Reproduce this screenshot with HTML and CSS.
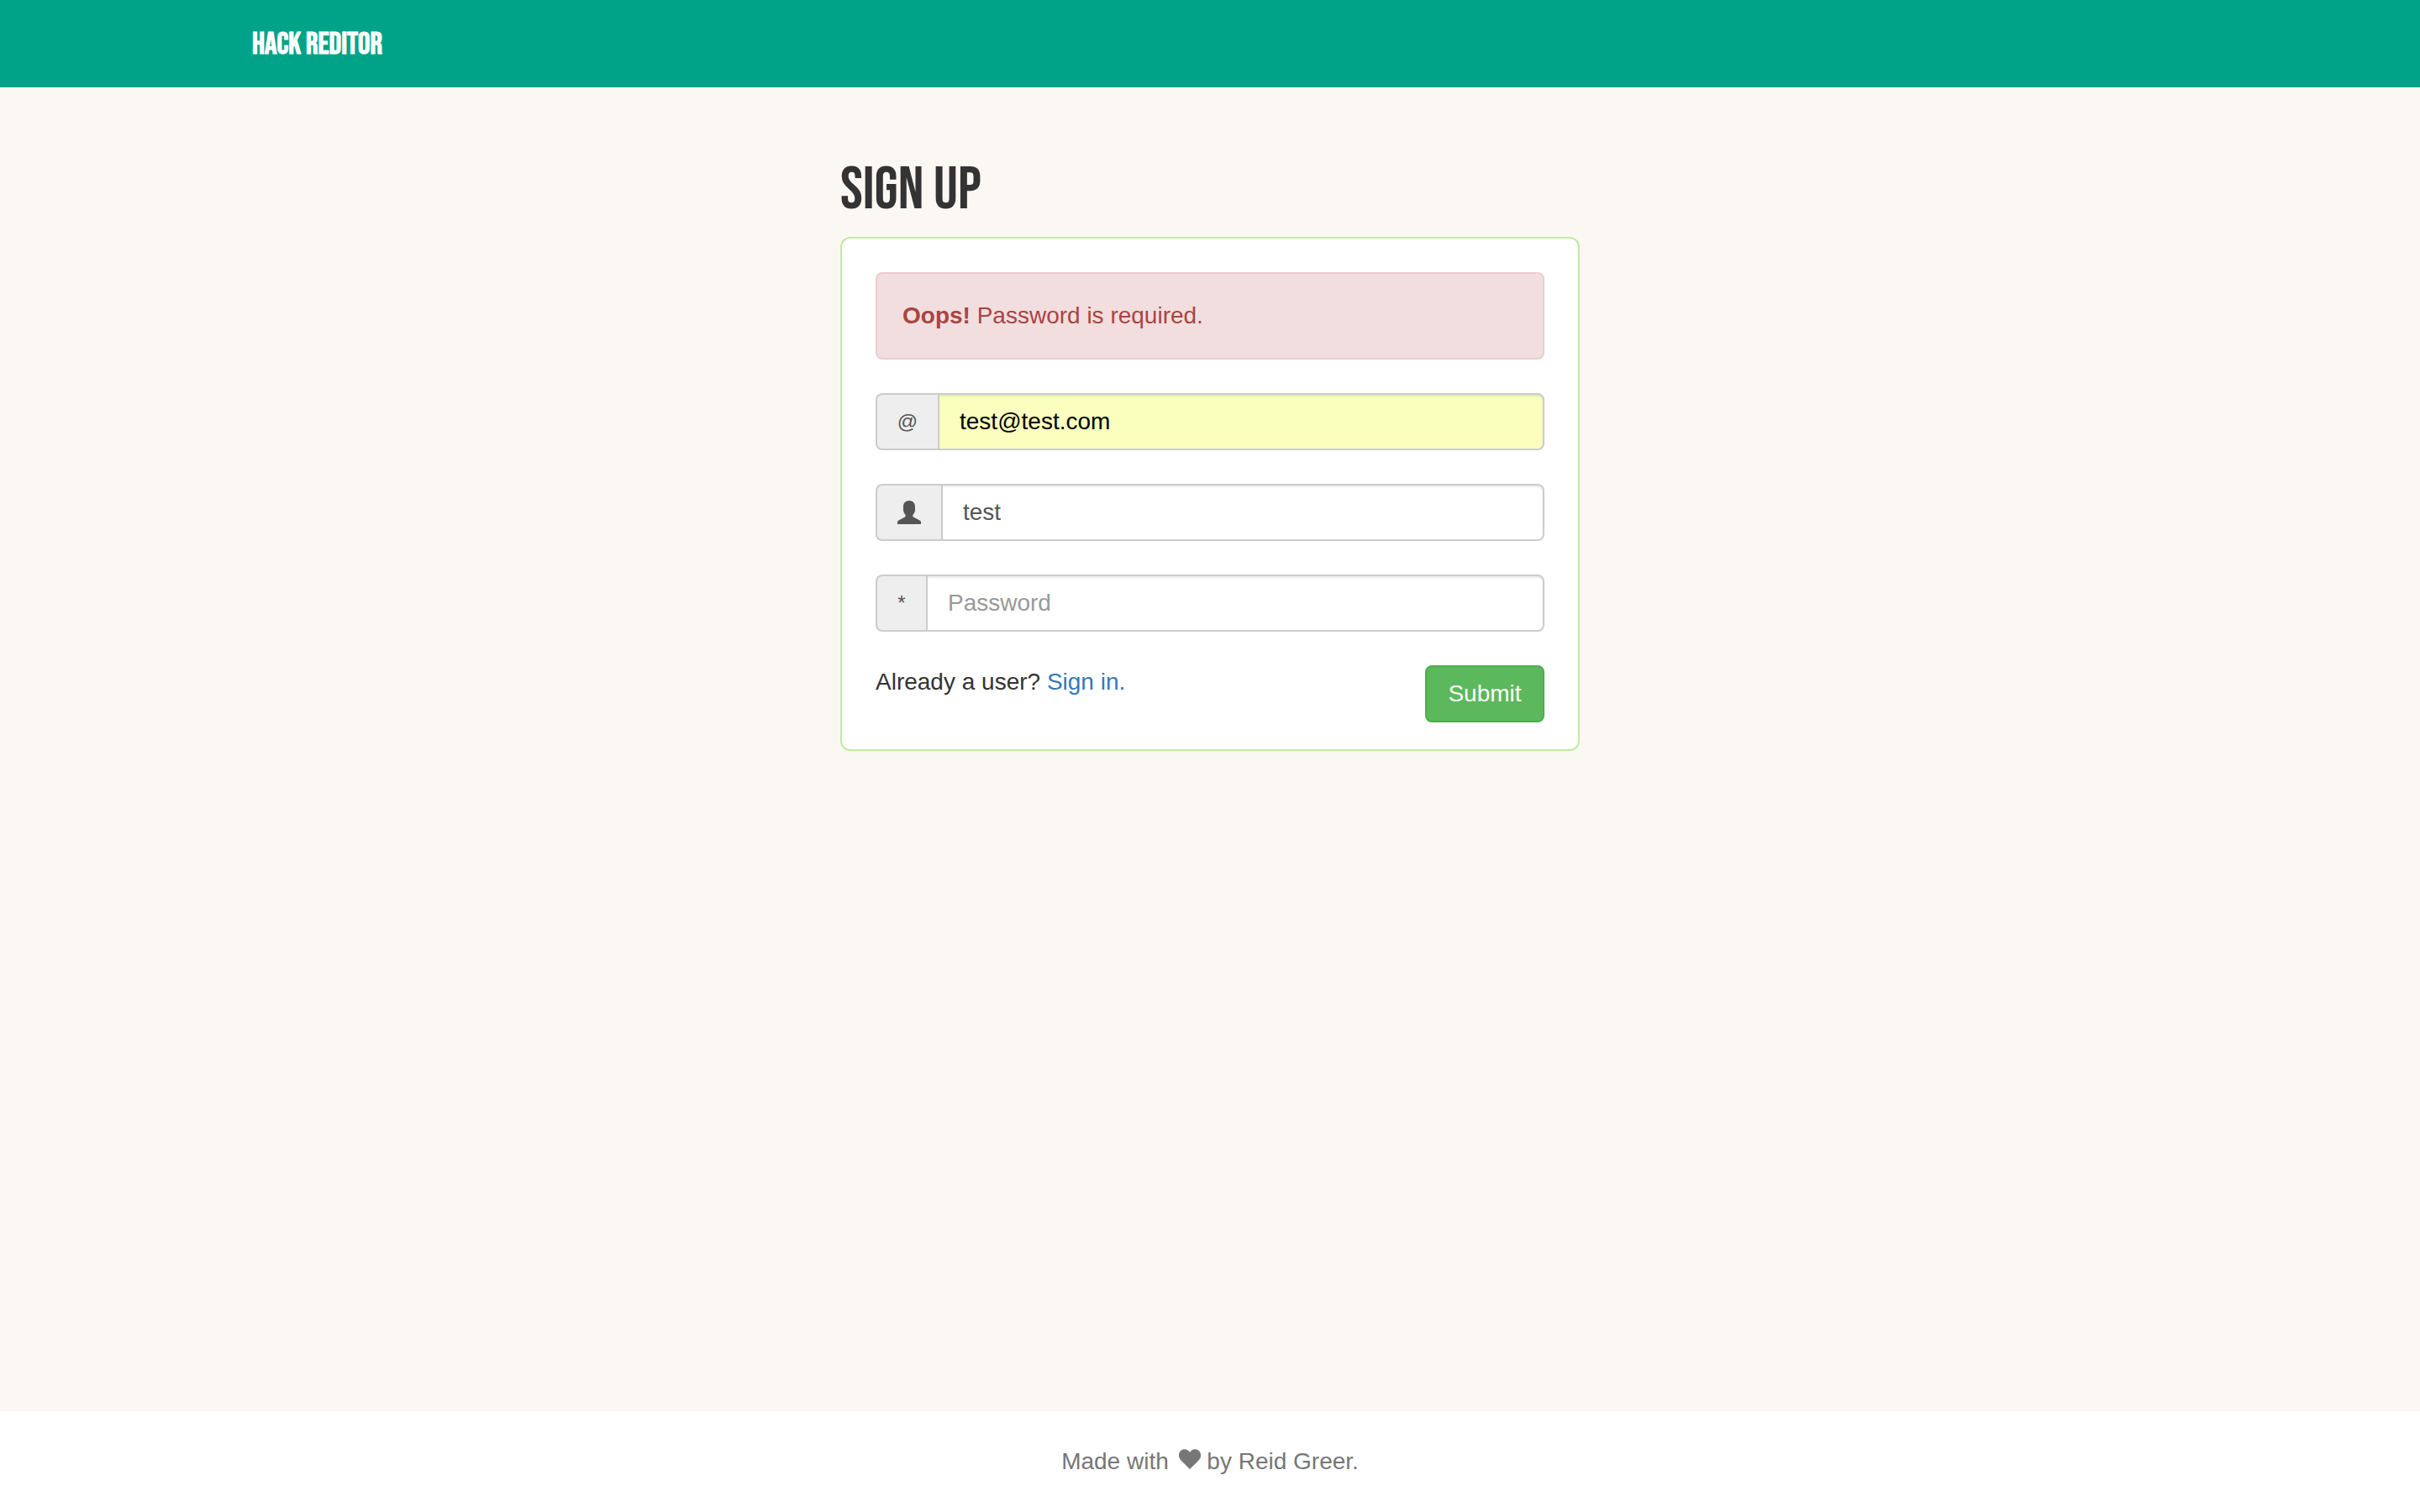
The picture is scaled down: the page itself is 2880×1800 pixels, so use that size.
FILE: index.html
```html
<!DOCTYPE html>
<html lang="en">
<head>
  <meta charset="utf-8">
  <title>Hack Reditor</title>
  <link rel="stylesheet" href="styles.css">
</head>
<body>
  <header class="navbar">
    <div class="container">
      <a class="brand" href="#">HACK REDITOR</a>
    </div>
  </header>
  <main class="signup">
    <h1 class="title">SIGN UP</h1>
    <form class="card">
      <div class="alert" role="alert"><strong>Oops!</strong> Password is required.</div>
      <div class="field">
        <label class="addon addon-at" for="email">@</label>
        <input class="control autofilled" id="email" type="email" aria-label="Email" value="test@test.com">
      </div>
      <div class="field">
        <label class="addon" for="username">
          <svg class="icon" viewBox="0 0 28 28" role="img" aria-label="Username">
            <path d="M14 0C18.500 0 21 3 21 7V11C21 14 19.500 15.500 18.500 17C18 18 18.200 19 19 19.500L26.500 23.500C27.700 24.200 28 24.800 28 26V28H0V26C0 24.800.3 24.200 1.500 23.500L9 19.500C9.800 19 10 18 9.500 17C8.500 15.500 7 14 7 11V7C7 3 9.500 0 14 0Z"/>
          </svg>
        </label>
        <input class="control" id="username" type="text" value="test">
      </div>
      <div class="field">
        <label class="addon addon-star" for="password">*</label>
        <input class="control" id="password" type="password" aria-label="Password" placeholder="Password">
      </div>
      <div class="actions">
        <p class="note">Already a user? <a class="link" href="#">Sign in.</a></p>
        <button class="submit" type="submit">Submit</button>
      </div>
    </form>
  </main>
  <footer class="footer">
    <p class="credit">Made with
      <svg class="heart" viewBox="0 0 26 24" role="img" aria-label="love"><path d="M13 24L2.500 13.500C-.8 10-.8 5 2 2.200C5-.9 10.500-.6 13 4C15.500-.6 21-.9 24 2.200C26.800 5 26.800 10 23.500 13.500Z"/></svg>
      by Reid Greer.</p>
  </footer>
</body>
</html>
```
FILE: styles.css
```css
* {
  box-sizing: border-box;
}

body {
  margin: 0;
  min-height: 100vh;
  display: flex;
  flex-direction: column;
  background: #fbf8f3;
  color: #333;
  font: 28px/40px "Helvetica Neue", "Liberation Sans", Arial, sans-serif;
}

.navbar {
  padding: 34px 0 30px;
  background: #00a388;
}

.container {
  max-width: 2340px;
  margin: 0 auto;
  padding: 0 30px;
}

.brand {
  display: block;
  color: #fff;
  font-family: "Bebas Neue", "Liberation Sans Narrow", sans-serif;
  font-size: 36px;
  font-weight: 700;
  text-decoration: none;
}

.signup {
  flex: 1;
  width: 100%;
  max-width: 880px;
  margin: 0 auto;
  padding-top: 84px;
}

.title {
  margin: 0 0 16px;
  font-family: "Bebas Neue", "Liberation Sans Narrow", sans-serif;
  font-size: 72px;
  font-weight: 500;
  line-height: 78px;
}

.card {
  display: flex;
  flex-direction: column;
  gap: 40px;
  padding: 40px 40px 32px;
  border: 2px solid #c0eb9f;
  border-radius: 12px;
  background: #fff;
}

.alert {
  padding: 30px;
  border: 2px solid #ebccd1;
  border-radius: 8px;
  background: #f2dede;
  color: #a94442;
}

.field {
  display: flex;
  height: 68px;
}

.addon {
  display: flex;
  align-items: center;
  justify-content: center;
  padding: 0 24px;
  border: 2px solid #ccc;
  border-right: 0;
  border-radius: 8px 0 0 8px;
  background: #eee;
  color: #555;
}

.addon-at {
  width: 74px;
  font-size: 24px;
}

.addon-star {
  width: 60px;
  font-size: 24px;
}

.icon {
  width: 28px;
  height: 28px;
  fill: #555;
}

.control {
  flex: 1;
  min-width: 0;
  padding: 0 24px;
  border: 2px solid #ccc;
  border-radius: 0 8px 8px 0;
  background: #fff;
  box-shadow: inset 0 2px 2px rgba(0, 0, 0, 0.075);
  color: #555;
  font: inherit;
}

.control::placeholder {
  color: #999;
  opacity: 1;
}

.autofilled {
  background: #faffbd;
  color: #000;
}

.actions {
  display: flex;
  align-items: flex-start;
  justify-content: space-between;
}

.note,
.credit {
  margin: 0;
}

.link {
  color: #337ab7;
  text-decoration: none;
}

.submit {
  width: 142px;
  height: 68px;
  padding: 0;
  border: 2px solid #4cae4c;
  border-radius: 8px;
  background: #5cb85c;
  color: #fff;
  font: inherit;
}

.footer {
  padding: 40px;
  background: #fff;
  color: #777;
  text-align: center;
}

.heart {
  width: 26px;
  height: 24px;
  margin: 0 0 0 4px;
  fill: #777;
}
```
